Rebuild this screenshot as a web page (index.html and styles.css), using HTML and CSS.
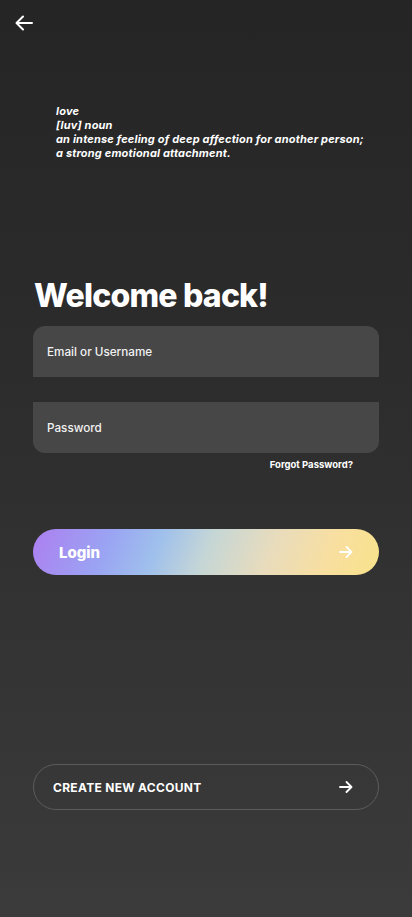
FILE: index.html
```html
<!DOCTYPE html>
<html>
<head>
<meta charset="utf-8">
<link rel="stylesheet" href="styles.css">
</head>
<body>
<div class="screen">
  <header class="topbar">
    <svg class="back" width="18" height="16" viewBox="0 0 18 16"><path d="M17 8H2M8 1.5L1.5 8 8 14.5" fill="none" stroke="#fff" stroke-width="2" stroke-linecap="round" stroke-linejoin="round"/></svg>
  </header>
  <div class="definition">
    <p>love</p>
    <p>[luv] noun</p>
    <p>an intense feeling of deep affection for another person;</p>
    <p>a strong emotional attachment.</p>
  </div>
  <h1 class="title">Welcome back!</h1>
  <form class="form">
    <div class="field field-top">Email or Username</div>
    <div class="field field-bottom">Password</div>
    <div class="forgot">Forgot Password?</div>
    <button type="button" class="login">
      <span>Login</span>
      <svg width="14" height="12" viewBox="0 0 14 12"><path d="M1 6H12.5M7.5 1L12.5 6 7.5 11" fill="none" stroke="#fff" stroke-width="1.8" stroke-linecap="round" stroke-linejoin="round"/></svg>
    </button>
  </form>
  <button type="button" class="create">
    <span>CREATE NEW ACCOUNT</span>
    <svg width="14" height="12" viewBox="0 0 14 12"><path d="M1 6H12.5M7.5 1L12.5 6 7.5 11" fill="none" stroke="#fff" stroke-width="1.8" stroke-linecap="round" stroke-linejoin="round"/></svg>
  </button>
</div>
</body>
</html>
```
FILE: styles.css
```css
* { box-sizing: border-box; }
html, body { margin: 0; padding: 0; }
body {
  width: 412px;
  height: 917px;
  background: linear-gradient(180deg, #252525 0%, #2c2c2c 40%, #3b3b3b 100%);
  font-family: "Inter", "Noto Sans", sans-serif;
  color: #fff;
  overflow: hidden;
}
.screen {
  display: flex;
  flex-direction: column;
  padding: 0 33px;
  height: 917px;
}
.topbar {
  height: 46px;
  margin-left: -18px;
  padding-top: 15px;
}
.back { display: block; }
.definition {
  margin: 58px 0 0 23px;
  font-size: 11px;
  font-weight: 700;
  font-style: italic;
  line-height: 14px;
  letter-spacing: 0.18px;
}
.definition p { margin: 0; }
.title {
  margin: 116px 0 0 1px;
  font-size: 32px;
  font-weight: 800;
  line-height: 40px;
  letter-spacing: -0.8px;
}
.form {
  margin-top: 10px;
  display: flex;
  flex-direction: column;
}
.field {
  height: 51px;
  background: #474747;
  font-size: 11.7px;
  font-weight: 500;
  padding-left: 14px;
  display: flex;
  align-items: center;
  color: #f2f2f2;
}
.field-top { border-radius: 12px 12px 0 0; }
.field-bottom { border-radius: 0 0 12px 12px; margin-top: 25px; }
.forgot {
  align-self: flex-end;
  margin: 6px 26px 0 0;
  font-size: 9.5px;
  font-weight: 700;
  line-height: 12px;
}
button {
  font-family: inherit;
  border: none;
  cursor: pointer;
  color: #fff;
}
.login {
  margin-top: 58px;
  height: 46px;
  border-radius: 23px;
  display: flex;
  align-items: center;
  justify-content: space-between;
  padding: 0 26px 0 26px;
  background: linear-gradient(112deg, #ad7ff0 0%, #9aa4f3 22%, #9fc0ec 36%, #c5d6d6 50%, #e9dcbc 68%, #f9df9f 85%, #f8e28a 100%);
  font-size: 15px;
  font-weight: 800;
}
.create {
  margin-top: 189px;
  height: 46px;
  border-radius: 23px;
  border: 1px solid #5c5c5c;
  background: transparent;
  display: flex;
  align-items: center;
  justify-content: space-between;
  padding: 0 25px 0 19px;
  font-size: 12px;
  font-weight: 700;
  letter-spacing: 0.3px;
}
```
